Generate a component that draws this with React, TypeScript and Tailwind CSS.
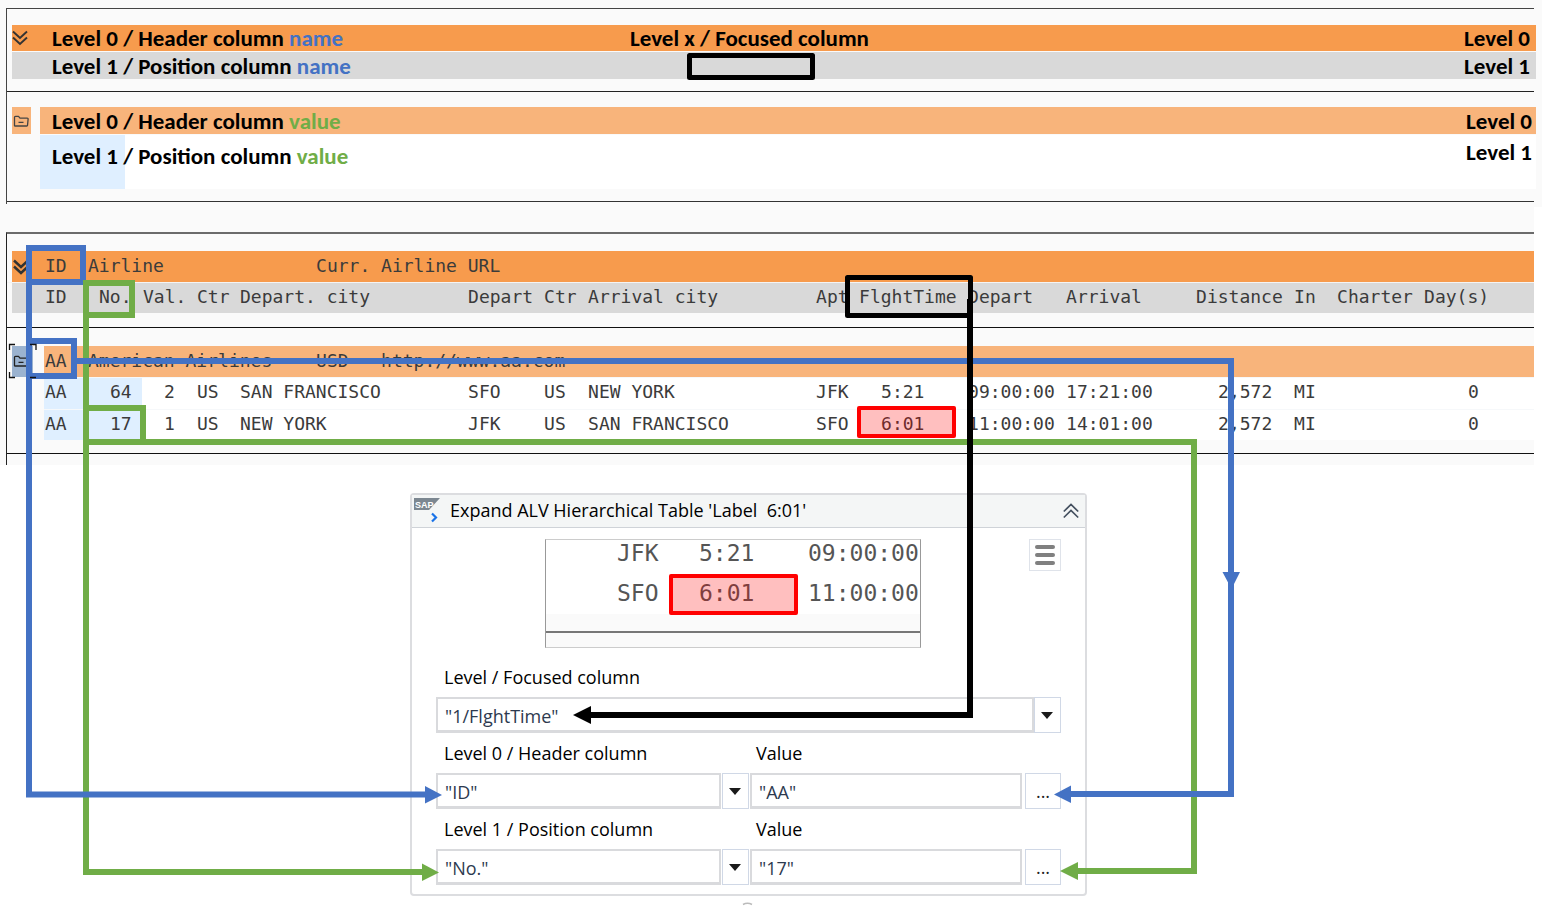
import React from "react";

const MONO = "font-['DejaVu_Sans_Mono','Liberation_Mono',monospace]";
const SANS = "font-['Open_Sans','Noto_Sans',sans-serif]";
const LEGEND = "font-['Carlito','Calibri','Lato',sans-serif]";

function ChevronsDown({ strong = false }: { strong?: boolean }) {
  return (
    <svg className="block h-4 w-4" viewBox="0 0 16 16" fill="none" stroke="#333" strokeWidth={strong ? 2.4 : 1.9} aria-hidden="true">
      <path d="M1 1.500 8 8l7-6.500M1 7.500 8 14l7-6.500" />
    </svg>
  );
}

function FolderIcon({ color = "#444" }: { color?: string }) {
  return (
    <svg className="block h-3 w-4" viewBox="0 0 16 12" fill="none" stroke={color} strokeWidth="1.300" strokeLinejoin="round" aria-hidden="true">
      <path d="M1.500 10.500V2.300q0-1 1-1h3l1.500 1.800h7.200q1 0 .9 1l-.6 6.400q0 .5-.8.500H2.300q-.8 0-.8-.500zM5.500 7.300h5" />
    </svg>
  );
}

function LegendText({ children, tone, word }: { children: React.ReactNode; tone: string; word: string }) {
  return (
    <span>
      {children} <span className={tone}>{word}</span>
    </span>
  );
}

function Legend() {
  return (
    <section className={`bg-[#fafafa] pt-2 pb-[3px] text-[23px] leading-[26px] font-bold text-black ${LEGEND}`}>
      <div className="mr-2 ml-1.5 border-t border-l border-[#444] pt-4">
        <div className="-mr-0.5 ml-[5px] grid h-[26px] grid-cols-[578px_1fr_auto] items-center bg-[#f79b4d] pr-1.5">
          <div className="flex items-center">
            <span className="w-10">
              <ChevronsDown />
            </span>
            <LegendText tone="text-[#4472c4]" word="name">Level 0 / Header column</LegendText>
          </div>
          <span className="pl-10">Level x / Focused column</span>
          <span>Level 0</span>
        </div>
        <div className="mt-px -mr-0.5 ml-[5px] flex h-[27px] items-center justify-between bg-[#d9d9d9] pr-1.5 pl-10">
          <LegendText tone="text-[#4472c4]" word="name">Level 1 / Position column</LegendText>
          <span>Level 1</span>
        </div>
        <div className="mt-3 border-t border-[#222] pt-[15px]">
          <div className="-mr-0.5 ml-[5px] flex h-[27px] items-stretch">
            <span className="flex w-[19px] items-center bg-[#f8b47b] pl-px">
              <FolderIcon />
            </span>
            <div className="ml-[9px] flex grow items-center justify-between bg-[#f8b47b] pr-1 pl-3">
              <LegendText tone="text-[#70ad47]" word="value">Level 0 / Header column</LegendText>
              <span>Level 0</span>
            </div>
          </div>
          <div className="mt-px -mr-0.5 ml-[33px] flex h-[54px] justify-between bg-[linear-gradient(to_right,#dfefff_85px,#ffffff_85px)] pr-1 pl-3">
            <span className="pt-2">
              <LegendText tone="text-[#70ad47]" word="value">Level 1 / Position column</LegendText>
            </span>
            <span className="pt-1">Level 1</span>
          </div>
        </div>
        <div className="mt-3 border-t border-[#333] pt-0.5" />
      </div>
    </section>
  );
}

type Flight = {
  id: string;
  no: string;
  val: string;
  from: string;
  fromCity: string;
  fromApt: string;
  to: string;
  toCity: string;
  toApt: string;
  time: string;
  depart: string;
  arrival: string;
};

const flights: Flight[] = [
  { id: "AA", no: "64", val: "2", from: "US", fromCity: "SAN FRANCISCO", fromApt: "SFO", to: "US", toCity: "NEW YORK", toApt: "JFK", time: "5:21", depart: "09:00:00", arrival: "17:21:00" },
  { id: "AA", no: "17", val: "1", from: "US", fromCity: "NEW YORK", fromApt: "JFK", to: "US", toCity: "SAN FRANCISCO", toApt: "SFO", time: "6:01", depart: "11:00:00", arrival: "14:01:00" },
];

function FlightTable() {
  return (
    <section className="mr-2 bg-[#fafafa] pt-[25px]">
      <div className={`ml-1.5 border-t-2 border-l border-t-[#6b6b6b] border-l-[#222] pt-[17px] text-[18px] leading-6 text-[#3b3b3b] ${MONO}`}>
        <table className="w-full table-fixed border-separate border-spacing-0 text-left whitespace-nowrap [&_td]:p-0 [&_td]:pl-px [&_th]:p-0 [&_th]:pb-0.5 [&_th]:pl-px [&_th]:font-normal">
          <colgroup>
            <col className="w-[5px]" />
            <col className="w-[21px]" />
            <col className="w-[11px]" />
            <col className="w-[43px]" />
            <col className="w-[55px]" />
            <col className="w-[54px]" />
            <col className="w-[43px]" />
            <col className="w-[76px]" />
            <col className="w-[65px]" />
            <col className="w-[87px]" />
            <col className="w-[76px]" />
            <col className="w-[44px]" />
            <col className="w-[228px]" />
            <col className="w-[43px]" />
            <col className="w-[109px]" />
            <col className="w-[98px]" />
            <col className="w-[130px]" />
            <col className="w-[98px]" />
            <col className="w-[43px]" />
            <col className="w-[87px]" />
            <col />
          </colgroup>
          <thead>
            <tr className="h-8 [&>*]:border-b [&>*]:border-[#f4f4f4] [&>*:not(:first-child)]:bg-[#f79b4d]">
              <td />
              <td colSpan={2}>
                <ChevronsDown strong />
              </td>
              <th scope="col">ID</th>
              <th scope="col" colSpan={4}>Airline</th>
              <th scope="col">Curr.</th>
              <th scope="col" colSpan={12}>Airline URL</th>
            </tr>
            <tr className="h-[30px] [&>*:not(:first-child)]:bg-[#d9d9d9]">
              <td />
              <td colSpan={2} />
              <th scope="col">ID</th>
              <th scope="col"><span className="pl-[11px]">No.</span></th>
              <th scope="col">Val.</th>
              <th scope="col">Ctr</th>
              <th scope="col" colSpan={3}>Depart. city</th>
              <th scope="col">Depart</th>
              <th scope="col">Ctr</th>
              <th scope="col">Arrival city</th>
              <th scope="col">Apt</th>
              <th scope="col">FlghtTime</th>
              <th scope="col">Depart</th>
              <th scope="col">Arrival</th>
              <th scope="col">Distance</th>
              <th scope="col">In</th>
              <th scope="col">Charter</th>
              <th scope="col">Day(s)</th>
            </tr>
          </thead>
          <tbody>
            <tr className="h-[15px]" aria-hidden="true">
              <td colSpan={21} className="border-b border-[#111]" />
            </tr>
            <tr className="h-[18px]" aria-hidden="true">
              <td colSpan={21} />
            </tr>
            <tr className="h-[31px] [&>*]:pb-0.5! [&>*:nth-child(n+4)]:bg-[#f8b47b]">
              <td />
              <td className="bg-[#9bb3d0]">
                <FolderIcon color="#222" />
              </td>
              <td />
              <td>AA</td>
              <td colSpan={4}>American Airlines</td>
              <td>USD</td>
              <td colSpan={12}>http://www.aa.com</td>
            </tr>
            {flights.map((f) => (
              <tr key={f.no} className="h-8 last:h-[31px] [&>*]:pb-[3px]! [&>*:nth-child(n+4)]:border-t [&>*:nth-child(n+4)]:border-[#f6f8fa] [&>*:nth-child(n+6)]:bg-white">
                <td />
                <td />
                <td />
                <td className="bg-[#dfefff]">{f.id}</td>
                <td className="bg-[#dfefff]"><span className="pl-[22px]">{f.no}</span></td>
                <td><span className="pl-[21px]">{f.val}</span></td>
                <td>{f.from}</td>
                <td colSpan={3}>{f.fromCity}</td>
                <td>{f.fromApt}</td>
                <td>{f.to}</td>
                <td>{f.toCity}</td>
                <td>{f.toApt}</td>
                <td><span className="pl-[22px]">{f.time}</span></td>
                <td>{f.depart}</td>
                <td>{f.arrival}</td>
                <td><span className="pl-[22px]">2,572</span></td>
                <td>MI</td>
                <td />
                <td><span className="pl-11">0</span></td>
              </tr>
            ))}
          </tbody>
        </table>
        <div className="mt-[13px] border-t border-[#111] pt-[11px]" />
      </div>
    </section>
  );
}

function TextBox({ id, value, className }: { id: string; value: string; className: string }) {
  return (
    <input
      id={id}
      type="text"
      defaultValue={value}
      className={`h-9 border-2 border-b-[3px] border-[#d9dadd] bg-white px-[7px] pt-0.5 text-[#2d3a4f] outline-none ${className}`}
    />
  );
}

function DropButton({ label }: { label: string }) {
  return (
    <button type="button" aria-label={label} className="flex h-9 w-[27px] shrink-0 items-center justify-center border border-[#d0d8e6] bg-white pr-0.5">
      <svg className="h-[7px] w-3" viewBox="0 0 12 7" fill="#1a1a1a" aria-hidden="true">
        <path d="M0 0h12L6 7z" />
      </svg>
    </button>
  );
}

function PairRow({ id, label, column, value }: { id: string; label: string; column: string; value: string }) {
  return (
    <div className="grid grid-cols-[285px_27px_274px_36px] gap-x-px">
      <label htmlFor={`${id}-column`} className="col-span-2 h-10 pl-2 leading-10 text-black">{label}</label>
      <label htmlFor={`${id}-value`} className="col-span-2 h-10 pl-1.5 leading-10 text-black">Value</label>
      <TextBox id={`${id}-column`} value={column} className="w-full" />
      <DropButton label={`Choose ${label}`} />
      <TextBox id={`${id}-value`} value={value} className="w-[272px]" />
      <button type="button" aria-label={`Edit ${label} value`} className="h-9 border border-[#d0d8e6] bg-white text-[#222]">...</button>
    </div>
  );
}

function ActivityCard() {
  return (
    <section className={`mt-7 ml-[410px] w-[677px] rounded border-2 border-[#dcdde0] bg-white pb-[9px] text-[18px] leading-6 ${SANS}`}>
      <header className="flex h-[33px] items-center border-b border-[#cfd3d8] bg-[#f4f6f6] pr-1.5 pl-0.5 text-black">
        <svg className="h-7 w-7 shrink-0" viewBox="0 0 28 28" aria-hidden="true">
          <path d="M0 1h26L15 13H0z" fill="#7c8791" />
          <text x="1" y="11" fill="#fff" fontFamily="Liberation Sans" fontSize="9" fontWeight="bold">SAP</text>
          <path d="m18 16.500 4 4-4 4" fill="none" stroke="#1a73e8" strokeWidth="2.200" />
        </svg>
        <h2 className="grow pb-[3px] pl-2 whitespace-pre">Expand ALV Hierarchical Table 'Label  6:01'</h2>
        <button type="button" aria-label="Collapse">
          <svg className="block h-4 w-4" viewBox="0 0 16 16" fill="none" stroke="#44505f" strokeWidth="1.700" aria-hidden="true">
            <path d="m.8 8.500 7.200-7 7.200 7M.8 14.500l7.200-7 7.200 7" />
          </svg>
        </button>
      </header>
      <div className="px-6 pt-[11px]">
        <div className="flex items-start justify-between pl-[109px]">
          <div className={`h-[109px] w-[376px] border border-[#999] border-y-[#ccc] bg-[#fafafa] text-[23px] leading-10 text-[#555] ${MONO}`}>
            <div className="h-[74px] overflow-hidden bg-white">
              <div className="-mt-[7px] grid grid-cols-[82px_109px_1fr] pl-[71px]">
                <span>JFK</span>
                <span>5:21</span>
                <span>09:00:00</span>
                <span>SFO</span>
                <span>6:01</span>
                <span>11:00:00</span>
              </div>
            </div>
            <div className="mt-[17px] border-t-2 border-[#777]" />
          </div>
          <button type="button" aria-label="Options" className="flex h-8 w-8 flex-col items-center justify-center gap-1 border border-[#dfe3ea] bg-white">
            <span className="h-1 w-5 rounded-sm bg-[#808080]" />
            <span className="h-1 w-5 rounded-sm bg-[#808080]" />
            <span className="h-1 w-5 rounded-sm bg-[#808080]" />
          </button>
        </div>
        <div className="mt-[9px]">
          <label htmlFor="focused" className="block h-10 pl-2 leading-10 text-black">Level / Focused column</label>
          <div className="flex">
            <TextBox id="focused" value={'"1/FlghtTime"'} className="min-w-0 grow" />
            <DropButton label="Choose Level / Focused column" />
          </div>
        </div>
        <PairRow id="header" label="Level 0 / Header column" column={'"ID"'} value={'"AA"'} />
        <PairRow id="position" label="Level 1 / Position column" column={'"No."'} value={'"17"'} />
      </div>
    </section>
  );
}

function Connectors() {
  return (
    <svg className="pointer-events-none absolute top-0 left-0" width="1542" height="910" viewBox="0 0 1542 910" fill="none" aria-hidden="true">
      <g stroke="#70ad47" strokeWidth="6">
        <path d="M86 318V872H424" />
        <path d="M86 442H1194V871H1076" />
        <rect x="86" y="408" width="57" height="34" />
      </g>
      <g stroke="#4472c4" strokeWidth="6">
        <rect x="29" y="248" width="54" height="34" />
        <rect x="29" y="341" width="45" height="35" />
        <path d="M29 282V794.500H427" />
        <path d="M76 361H1231V794H1069" />
      </g>
      <rect x="86" y="283" width="46" height="32" stroke="#70ad47" strokeWidth="6" />
      <g fill="#4472c4">
        <path d="m425 786 17 9-17 8.500z" />
        <path d="m1071 785.500-17 9 17 8.500z" />
        <path d="M1222.500 572h17.500l-8.500 17z" />
      </g>
      <g fill="#70ad47">
        <path d="m422 863.500 17 9-17 8.500z" />
        <path d="m1078 862-18 9 18 9z" />
      </g>
      <g stroke="#000" strokeLinejoin="round">
        <rect x="689.500" y="55.500" width="123" height="22" strokeWidth="5" />
        <rect x="847.500" y="277.500" width="123" height="38" strokeWidth="5" />
        <path d="M970 299V715H589" strokeWidth="6" strokeLinejoin="miter" />
      </g>
      <path d="m591 706-18 9 18 9z" fill="#000" />
      <g fill="#ff0000" fillOpacity=".25" stroke="#ff0000" strokeWidth="4" strokeLinejoin="round">
        <rect x="859" y="408" width="95" height="28" />
        <rect x="671" y="576" width="125" height="37" />
      </g>
      <g stroke="#111" strokeWidth="1.300">
        <path d="M9.500 350V344.500H15M30 344.500H36V350M9.500 372V377.500H15M30 377.500H36" />
      </g>
      <path d="M743 904.500q4.500-2.500 9 0" stroke="#bbb" strokeWidth="1.500" />
    </svg>
  );
}

export default function App() {
  return (
    <main className="relative min-h-screen bg-white">
      <Legend />
      <FlightTable />
      <ActivityCard />
      <Connectors />
    </main>
  );
}
